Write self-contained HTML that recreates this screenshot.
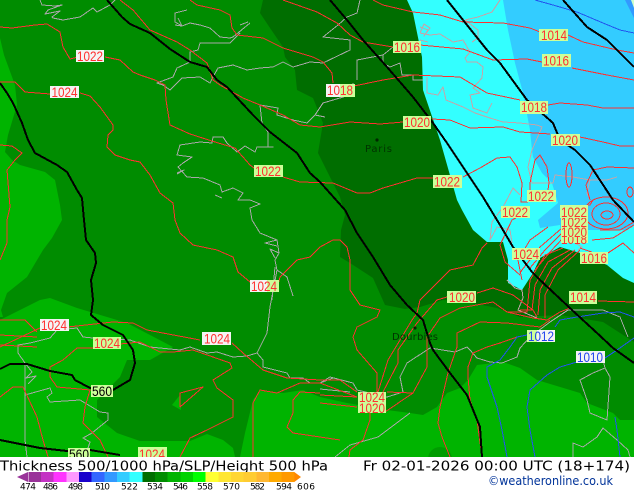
<!DOCTYPE html>
<html><head><meta charset="utf-8"><style>
html,body{margin:0;padding:0;background:#fff;width:634px;height:490px;overflow:hidden}
svg{display:block}
.g{fill:none;stroke-linejoin:round;shape-rendering:crispEdges}
.lb text{font-family:"Liberation Sans","DejaVu Sans",sans-serif;font-size:13.5px;text-anchor:middle;fill:#ff3030}
text{font-family:"DejaVu Sans","Liberation Sans",sans-serif}
</style></head><body>
<svg width="634" height="490" viewBox="0 0 634 490" xmlns="http://www.w3.org/2000/svg">
<defs><clipPath id="map"><rect x="0" y="0" width="634" height="457"/></clipPath></defs>
<g clip-path="url(#map)">
<rect width="634" height="457" fill="#008c00"/>
<g fill="#00b400">
<polygon points="0,38 4,55 15,85 17,105 8,135 5,152 12,160 20,165 45,172 55,180 60,205 62,220 52,238 43,250 27,277 7,293 1,310 3,317 0,317"/>
<polygon points="0,320 20,310 40,300 50,298 77,308 127,323 173,347 150,360 127,360 120,377 97,400 97,417 117,433 140,441 190,441 207,434 223,440 233,448 235,457 0,457"/>
<polygon points="240,457 245,433 253,400 260,390 283,393 303,390 320,397 347,403 387,410 410,413 423,415 437,407 447,393 460,388 468,380 477,365 503,362 520,368 537,380 580,393 587,403 613,413 620,420 634,420 634,457"/>
<polygon points="172,405 180,395 181,410"/>
</g>
<ellipse cx="440" cy="459" rx="12" ry="12" fill="#009c00"/>
<polygon fill="#006e00" points="263,0 260,13 270,28 283,47 285,57 295,70 297,90 313,98 323,123 318,153 340,197 345,215 341,230 340,257 350,263 373,278 385,305 405,309 420,307 443,300 467,302 497,308 520,317 560,315 603,322 634,342 634,283 623,278 607,265 580,253 560,247 540,258 533,273 522,290 510,283 508,260 503,242 487,242 473,230 462,210 457,200 440,140 423,90 422,57 413,13 407,0"/>
<polygon fill="#33ffff" points="407,0 413,13 422,57 423,90 440,140 457,200 462,210 473,230 487,242 503,242 508,260 508,283 522,290 533,273 540,258 560,247 580,253 607,265 623,278 634,283 634,0"/>
<polygon fill="#33ccff" points="503,0 508,30 515,63 523,93 530,130 532,150 533,157 542,173 552,183 558,203 538,220 540,228 560,225 562,240 575,242 587,230 627,230 634,225 634,0"/>
<polygon fill="#3399ff" points="625,0 634,18 634,0"/>
<polygon fill="#ccffcc" points="631,0 634,8 634,0"/>

<!-- coastlines on green -->
<g class="g" stroke="#a8a8a8" stroke-width="1">
<path d="M40,0L42,5L55,6L62,5L48,10L45,14L60,11L52,17L53,18L63,20L80,17L93,8L97,12L110,5L115,0"/>
<path d="M250,23L233,37L230,38L220,37L210,28L200,25L190,23L182,26L175,22L175,13L187,10"/>
<path d="M240,33L230,43L200,43L198,50L190,52L190,62L177,68L173,77L157,83L163,85L170,90L182,78L200,77L210,83L213,77L218,68L233,65L247,70L260,68L273,67L283,62L293,67L310,62L323,63L350,50L350,40L323,37L338,25L347,17L357,13L360,0"/>
<path d="M357,80L357,60L383,55L393,47M383,55L383,63L390,67L400,63L402,75L413,75L413,80L423,80"/>
<path d="M353,83L350,95L323,103L315,115L325,117M315,115L307,123L293,120L277,115L278,108L260,105L262,123L268,132L268,147L273,147L257,147L255,152L245,146L237,152L227,143L223,137L213,137L212,143L200,142L180,145L177,155L192,157L183,163L178,167L187,177L203,178L220,185L222,192L233,188L243,193L238,200L250,200L260,204L250,208L252,220L260,233L277,240L279,253L275,260L277,270L270,307L267,333L257,353L247,356L233,357L217,352L207,353L190,347L180,350L150,347L130,340L93,338L83,337L77,328L57,330L50,338L30,343L18,345L18,353L25,363L25,440L27,457"/>
<path d="M25,395L50,388L52,393L47,397L50,402L80,400L100,412L108,413L108,420L92,433L83,438L90,442L85,457"/>
<path d="M25,363L32,372L26,378L36,376L28,384"/>
<path d="M277,240L265,243L277,246M279,253L270,249L275,258M277,270L287,277L293,296M275,267L272,300"/>
<path d="M257,353L263,360L263,367L287,373L290,378L303,378L310,383L320,383L330,377L353,383L357,390L387,397L403,392L400,377L407,363L430,348L455,352L467,347L470,350L477,358L490,362L502,363L517,357L520,348L530,337L550,322L568,310L603,310L620,317L628,337"/>
<path d="M603,360L605,368L610,377L607,420L590,413L587,400L580,380L593,373L605,368"/>
<path d="M410,413L378,437L350,445L335,457"/>
<path d="M573,457L573,443L583,447L597,437L603,428L617,440L628,450L630,457"/>
<path d="M320,383L333,378M320,389L350,392"/>
<path d="M240,25L248,22M175,25L182,26L178,18"/>
<path d="M177,173L184,170L177,174M215,195L222,198"/>
</g>
<!-- coastlines on cyan -->
<g class="g" stroke="#c4a4a8" stroke-width="1">
<path d="M500,0L492,12L478,17L465,20L478,30L478,38L472,42"/>
<path d="M420,33L430,35L440,34L453,42L463,40L470,52L465,58L467,62L477,62L483,67L482,78L473,88L480,93L470,95L473,108L487,113L492,103"/>
<path d="M427,77L427,93L438,95L443,87L446,100L463,107L475,113L490,118L503,122L520,123L537,125L542,127L532,150L528,167L532,183L553,183L555,175L573,177L590,180L587,193L590,200M590,180L607,180L617,177"/>
<path d="M420,27L428,30L424,36L430,28L424,24L420,33M420,40L428,42"/>
<path d="M520,195L513,188L503,207L492,222L490,240L497,227L510,230L512,243M575,243L582,247L578,250"/>
<path d="M507,280L515,288L522,290L523,298L518,310L537,318"/>
</g>

<!-- isobars -->
<g class="g" stroke="#ff3030" stroke-width="1">
<path d="M0,27L12,28L35,25L47,24L60,32L63,47L70,59L78,57M105,57L120,60L133,72L140,75L155,80L165,85L166,100L170,125L190,134L215,142L235,148L250,165L258,171M283,177L300,182L333,183L357,193L370,193L383,188L417,178L433,178M463,177L480,168L497,158L510,157L517,167L522,183L521,202L528,202"/>
<path d="M0,82L15,82L25,92L50,94M80,93L90,96L100,107L113,125L113,130L108,135L107,147L115,155L130,160L140,162L150,175L160,193L173,203L175,220L180,233L193,245L217,250L233,257L238,272L250,282M278,285L280,277L297,260L310,257L320,247L333,240L340,240L347,247L350,260L350,290L360,305L380,310L377,317L357,327L353,337L357,350L377,373L377,392"/>
<path d="M0,347L40,328M68,327L113,322L133,323L147,330L200,340M232,343L243,353L263,370L287,378L320,380L340,380L357,392"/>
<path d="M50,377L50,367L63,360L77,348L93,348M120,344L140,342L160,352L173,352L193,350L213,357L230,363L232,368L213,380L217,388L233,400L233,417L207,430L190,438L180,457M50,377L57,387L90,390L85,407L83,423L100,440L108,457"/>
<path d="M180,407L180,393L203,387L180,407"/>
<path d="M253,457L253,403L260,390L277,393L300,383L320,383L357,397"/>
<path d="M320,393L300,392L293,400L293,413L287,427L293,433L320,437L340,440"/>
<path d="M0,397L13,387L23,387L37,417L43,440L48,457"/>
<path d="M0,145L12,146L22,153L15,160L7,170L10,207L7,220L7,243L0,260"/>
<path d="M120,0L133,10L150,30L177,42L190,50L207,63L213,80L220,85L243,98L260,105L283,115L300,125L320,127L350,122L380,124L403,122M432,119L450,120L470,128L503,127L520,132L550,134M580,137L603,142L620,146L634,146"/>
<path d="M190,0L197,5L220,10L230,15L232,28L237,35L263,38L283,48L313,57L323,62L332,73L333,83M354,86L383,80L413,75L460,77L487,93L520,100M548,105L560,103L587,105L603,108L634,108"/>
<path d="M283,0L317,12L337,23L350,35L363,42L393,47M420,45L463,49L493,60L527,59L542,62M572,68L607,75L634,80"/>
<path d="M373,0L383,5L413,12L440,15L463,22L503,23L530,28L540,32M568,35L583,42L617,50L634,53"/>
<path d="M600,230L620,230L634,222M592,240L613,238L634,225M560,208L590,205L593,200M608,253L623,243L634,253M580,248L600,255"/>
<ellipse cx="569" cy="175" rx="3" ry="12"/><ellipse cx="630" cy="192" rx="3" ry="5"/>
<ellipse cx="607" cy="215" rx="6" ry="4"/><ellipse cx="606" cy="214" rx="14" ry="11"/><ellipse cx="606" cy="213" rx="22" ry="16"/>
<path d="M530,190L530,183L535,160L540,155L547,167L549,183L547,197M593,170L607,167L634,168M593,170L586,185L590,200M530,210L512,220L500,245L505,262L520,275M548,227L530,240L518,260L522,280M562,228L540,247L522,270L520,273M562,233L545,250L530,268M563,238L550,252L535,270"/>
<path d="M563,248L545,255L530,280L527,312L507,312M570,250L548,262L535,285L532,310L520,310M575,250L552,268L540,290L538,315M580,250L558,270L545,295L545,318"/>
<path d="M378,392L388,360L412,320L417,313L420,300L440,280L450,270L473,265L482,248L487,243"/>
<path d="M383,392L398,363L398,350L417,323L437,300L447,297M477,293L493,288L513,295L533,310L537,317"/>
<path d="M387,392L413,393L427,367L427,337L440,318L460,308L493,302L507,312L533,318L547,320L560,312L570,308"/>
<path d="M370,407L370,420L363,440L350,450L349,457M385,412L413,393"/>
<path d="M438,423L440,407L448,373L457,347L457,333L480,322L507,323L540,327L550,320M438,423L442,437L450,457"/>
<path d="M468,367L473,353L487,347L500,343L517,337M468,367L468,377L470,400L477,420L482,457"/>
<path d="M598,301L634,302"/>
<path d="M0,320L25,320L37,332M0,335L37,337M0,345L37,347"/>
<path d="M320,380L340,380L357,392M320,395L357,397M320,403L357,407"/>
</g>
<g class="g" stroke="#2255ee" stroke-width="1">
<path d="M535,0L553,5L577,12L603,23L620,30L634,33"/>
<path d="M527,335L517,337L510,347L500,360L487,367L487,377L497,407L502,430L507,457"/>
<path d="M555,327L560,320L577,317L603,313L620,312L634,317"/>
<path d="M577,362L560,367L547,375L530,390L527,407L530,430L535,457"/>
<path d="M605,358L617,350L634,338"/>
<path d="M615,417L617,430L620,457"/>
</g>
<!-- thickness contours -->
<g class="g" stroke="#000" stroke-width="2">
<path d="M0,83L7,93L13,103L22,123L28,140L35,153L57,165L67,172L77,190L82,198L84,220L86,240L95,253L96,263L91,280L93,300L91,315L103,325L123,335L133,350L135,363L130,380L113,390L90,388L75,380L72,375L50,371L27,364L10,364L0,369"/>
<path d="M0,440L10,442L40,448L67,451L90,450L120,455"/>
<path d="M107,0L122,17L130,24L150,33L170,49L190,62L207,67L217,80L227,87L253,115L270,132L297,153L310,173L320,182L345,210L357,233L373,257L390,285L407,305L423,320L430,343L433,350L450,373L467,395L480,427L482,457"/>
<path d="M330,0L347,20L363,40L387,67L413,97L433,123L447,143L467,173L483,197L500,225L513,247L532,272L540,280L572,310L597,333L613,348L634,363"/>
<path d="M447,0L463,20L487,50L500,63L527,100L553,123L560,140L575,150L590,165L613,200L634,222"/>
<path d="M563,0L587,27L607,40L634,67"/>
</g>
<!-- cities -->
<circle cx="377" cy="140" r="1.6" fill="#002800"/>
<text x="365" y="152" font-size="10" fill="#003300" textLength="27">Paris</text>
<circle cx="415" cy="328" r="1.6" fill="#002800"/>
<text x="392" y="340" font-size="10" fill="#003300" textLength="46">Dourbies</text>
<!-- labels -->
<g fill="#f4f4f4">
<rect x="76" y="50" width="28" height="12"/><rect x="50" y="86" width="29" height="12"/>
<rect x="326" y="84" width="29" height="13"/><rect x="250" y="280" width="29" height="12"/>
<rect x="40" y="319" width="29" height="12"/><rect x="202" y="332" width="29" height="13"/>
<rect x="527" y="330" width="28" height="12"/><rect x="576" y="351" width="29" height="12"/>
</g>
<g fill="#ccff99">
<rect x="254" y="165" width="29" height="12"/><rect x="393" y="41" width="28" height="12"/>
<rect x="403" y="116" width="28" height="13"/><rect x="433" y="175" width="29" height="13"/>
<rect x="539" y="29" width="29" height="12"/><rect x="542" y="54" width="29" height="13"/>
<rect x="520" y="101" width="28" height="13"/><rect x="551" y="134" width="29" height="12"/>
<rect x="527" y="190" width="29" height="12"/><rect x="501" y="206" width="29" height="12"/>
<rect x="560" y="205" width="28" height="13"/><rect x="561" y="218" width="27" height="25"/>
<rect x="512" y="248" width="28" height="12"/><rect x="580" y="252" width="28" height="12"/>
<rect x="569" y="291" width="28" height="13"/><rect x="447" y="291" width="29" height="12"/>
<rect x="93" y="337" width="28" height="12"/><rect x="91" y="385" width="22" height="12"/>
<rect x="358" y="392" width="28" height="21"/><rect x="68" y="448" width="22" height="12"/>
<rect x="138" y="447" width="29" height="12"/>
<rect x="267" y="280" width="12" height="12"/><rect x="340" y="84" width="15" height="13"/><rect x="527" y="330" width="10" height="12"/>
</g>
<g class="lb">
<text x="90" y="61" textLength="26" lengthAdjust="spacingAndGlyphs">1022</text><text x="64.500" y="97" textLength="26" lengthAdjust="spacingAndGlyphs">1024</text>
<text x="340" y="95" textLength="26" lengthAdjust="spacingAndGlyphs">1018</text><text x="264" y="291" textLength="26" lengthAdjust="spacingAndGlyphs">1024</text>
<text x="54" y="330" textLength="26" lengthAdjust="spacingAndGlyphs">1024</text><text x="217" y="343.500" textLength="26" lengthAdjust="spacingAndGlyphs">1024</text>
<text x="268" y="176" textLength="26" lengthAdjust="spacingAndGlyphs">1022</text><text x="407" y="52" textLength="26" lengthAdjust="spacingAndGlyphs">1016</text>
<text x="417" y="127" textLength="26" lengthAdjust="spacingAndGlyphs">1020</text><text x="447" y="186.500" textLength="26" lengthAdjust="spacingAndGlyphs">1022</text>
<text x="554" y="40" textLength="26" lengthAdjust="spacingAndGlyphs">1014</text><text x="556" y="65.500" textLength="26" lengthAdjust="spacingAndGlyphs">1016</text>
<text x="534" y="112" textLength="26" lengthAdjust="spacingAndGlyphs">1018</text><text x="565" y="145" textLength="26" lengthAdjust="spacingAndGlyphs">1020</text>
<text x="541" y="201" textLength="26" lengthAdjust="spacingAndGlyphs">1022</text><text x="515" y="217" textLength="26" lengthAdjust="spacingAndGlyphs">1022</text>
<text x="574" y="244" textLength="26" lengthAdjust="spacingAndGlyphs">1018</text>
<rect x="561" y="227" width="27" height="10" fill="#ccff99"/>
<text x="574" y="227" textLength="26" lengthAdjust="spacingAndGlyphs">1022</text>
<rect x="561" y="227" width="27" height="10" fill="#ccff99"/>
<text x="574" y="237" textLength="26" lengthAdjust="spacingAndGlyphs">1020</text>
<rect x="560" y="205" width="28" height="13" fill="#ccff99"/>
<text x="574" y="217" textLength="26" lengthAdjust="spacingAndGlyphs">1022</text>
<text x="526" y="259" textLength="26" lengthAdjust="spacingAndGlyphs">1024</text><text x="594" y="263" textLength="26" lengthAdjust="spacingAndGlyphs">1016</text>
<text x="583" y="302" textLength="26" lengthAdjust="spacingAndGlyphs">1014</text><text x="462" y="302" textLength="26" lengthAdjust="spacingAndGlyphs">1020</text>
<text x="107" y="348" textLength="26" lengthAdjust="spacingAndGlyphs">1024</text>
<text x="372" y="413" textLength="26" lengthAdjust="spacingAndGlyphs">1020</text>
<rect x="358" y="392" width="28" height="11" fill="#ccff99"/>
<text x="372" y="402" textLength="26" lengthAdjust="spacingAndGlyphs">1024</text>
<text x="152" y="459" textLength="26" lengthAdjust="spacingAndGlyphs">1024</text>
<text x="541" y="341" textLength="26" lengthAdjust="spacingAndGlyphs" style="fill:#2244ee">1012</text>
<text x="590" y="362" textLength="26" lengthAdjust="spacingAndGlyphs" style="fill:#2244ee">1010</text>
<text x="102" y="396" textLength="20" lengthAdjust="spacingAndGlyphs" style="fill:#000">560</text>
<text x="79" y="459" textLength="20" lengthAdjust="spacingAndGlyphs" style="fill:#000">560</text>
</g>
</g>
<!-- footer -->
<rect y="457" width="634" height="33" fill="#fff"/>
<text x="0" y="470.500" font-size="13" fill="#000" textLength="328" lengthAdjust="spacingAndGlyphs">Thickness 500/1000 hPa/SLP/Height 500 hPa</text>
<text x="363" y="470.500" font-size="13" fill="#000" textLength="267" lengthAdjust="spacingAndGlyphs">Fr 02-01-2026 00:00 UTC (18+174)</text>
<text x="488" y="485" font-size="12" fill="#003399" textLength="125" lengthAdjust="spacingAndGlyphs">©weatheronline.co.uk</text>
<polygon points="17,477 28,472 28,482" fill="#993399"/>
<g shape-rendering="crispEdges">
<rect x="28.300" y="472" width="12.700" height="10" fill="#993399"/>
<rect x="41" y="472" width="12.700" height="10" fill="#c433c4"/>
<rect x="53.700" y="472" width="12.700" height="10" fill="#ff33ff"/>
<rect x="66.300" y="472" width="12.700" height="10" fill="#ff99ff"/>
<rect x="79" y="472" width="12.700" height="10" fill="#1a00cc"/>
<rect x="91.700" y="472" width="12.700" height="10" fill="#3366ff"/>
<rect x="104.300" y="472" width="12.700" height="10" fill="#3399ff"/>
<rect x="117" y="472" width="12.700" height="10" fill="#33ccff"/>
<rect x="129.700" y="472" width="12.700" height="10" fill="#33ffff"/>
<rect x="142.300" y="472" width="12.700" height="10" fill="#006e00"/>
<rect x="155" y="472" width="12.700" height="10" fill="#008c00"/>
<rect x="167.700" y="472" width="12.700" height="10" fill="#00b400"/>
<rect x="180.300" y="472" width="12.700" height="10" fill="#00d200"/>
<rect x="193" y="472" width="12.700" height="10" fill="#00ff00"/>
<rect x="205.700" y="472" width="12.700" height="10" fill="#ffff33"/>
<rect x="218.300" y="472" width="12.700" height="10" fill="#ffe633"/>
<rect x="231" y="472" width="12.700" height="10" fill="#ffd633"/>
<rect x="243.700" y="472" width="12.700" height="10" fill="#ffcc33"/>
<rect x="256.300" y="472" width="12.700" height="10" fill="#ffb833"/>
<rect x="269" y="472" width="12.700" height="10" fill="#ffaa00"/>
<rect x="281.700" y="472" width="12.700" height="10" fill="#ff9900"/>
</g>
<polygon points="294.300,472 301,477 294.300,482" fill="#ff8800"/>
<g font-size="9" fill="#000">
<text x="20" y="489.500" textLength="16">474</text><text x="43" y="489.500" textLength="15">486</text>
<text x="68" y="489.500" textLength="15">498</text><text x="95" y="489.500" textLength="15">510</text>
<text x="121" y="489.500" textLength="17">522</text><text x="147" y="489.500" textLength="16">534</text>
<text x="173" y="489.500" textLength="15">546</text><text x="197" y="489.500" textLength="16">558</text>
<text x="223" y="489.500" textLength="17">570</text><text x="250" y="489.500" textLength="15">582</text>
<text x="276" y="489.500" textLength="16">594</text><text x="297" y="489.500" textLength="18">606</text>
</g>
</svg>
</body></html>
